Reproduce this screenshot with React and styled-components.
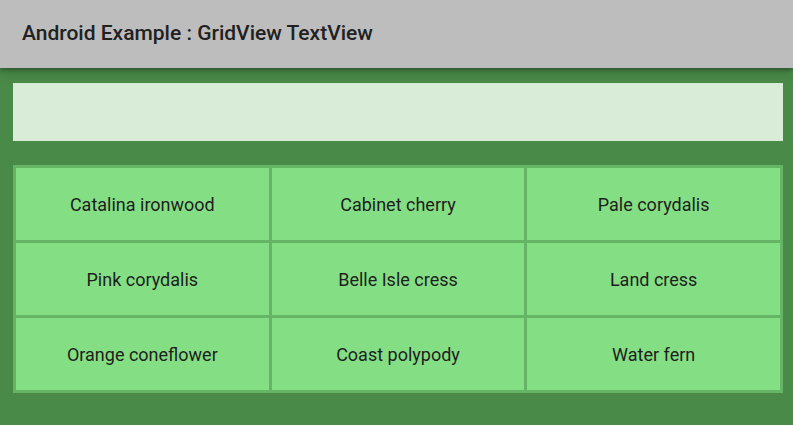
import React from "react";
import styled, { createGlobalStyle } from "styled-components";

const GlobalStyle = createGlobalStyle`
  html, body {
    margin: 0;
    padding: 0;
    height: 100%;
    background: #4a8a49;
  }
  #root {
    height: 100%;
  }
`;

const Screen = styled.div`
  width: 793px;
  height: 425px;
  display: flex;
  flex-direction: column;
  background: #4a8a49;
  font-family: Roboto, "Liberation Sans", sans-serif;
  overflow: hidden;
`;

const AppBar = styled.header`
  height: 68px;
  flex-shrink: 0;
  display: flex;
  align-items: center;
  padding: 0 22px 2px;
  box-sizing: border-box;
  background: #bdbdbd;
  color: #212121;
  font-size: 21px;
  font-weight: 500;
  position: relative;
  z-index: 1;
  box-shadow: 0 2px 4px rgba(0, 0, 0, 0.28), 0 6px 10px rgba(0, 0, 0, 0.14);
`;

const Content = styled.main`
  display: flex;
  flex-direction: column;
  padding: 15px 10px 0 13px;
  gap: 24px;
`;

const InputBox = styled.div`
  height: 58px;
  background: #d9ecd8;
`;

const Grid = styled.div`
  display: grid;
  grid-template-columns: repeat(3, 1fr);
  grid-auto-rows: 72px;
  gap: 3px;
  padding: 3px;
  background: #66b566;
`;

const Cell = styled.div`
  display: flex;
  align-items: center;
  justify-content: center;
  background: #84df84;
  color: #1e1e1e;
  font-size: 18px;
`;

const plants = [
  "Catalina ironwood",
  "Cabinet cherry",
  "Pale corydalis",
  "Pink corydalis",
  "Belle Isle cress",
  "Land cress",
  "Orange coneflower",
  "Coast polypody",
  "Water fern",
];

const App = () => {
  return (
    <>
      <GlobalStyle />
      <Screen>
        <AppBar>Android Example : GridView TextView</AppBar>
        <Content>
          <InputBox />
          <Grid>
            {plants.map((name) => (
              <Cell key={name}>{name}</Cell>
            ))}
          </Grid>
        </Content>
      </Screen>
    </>
  );
};

export default App;
